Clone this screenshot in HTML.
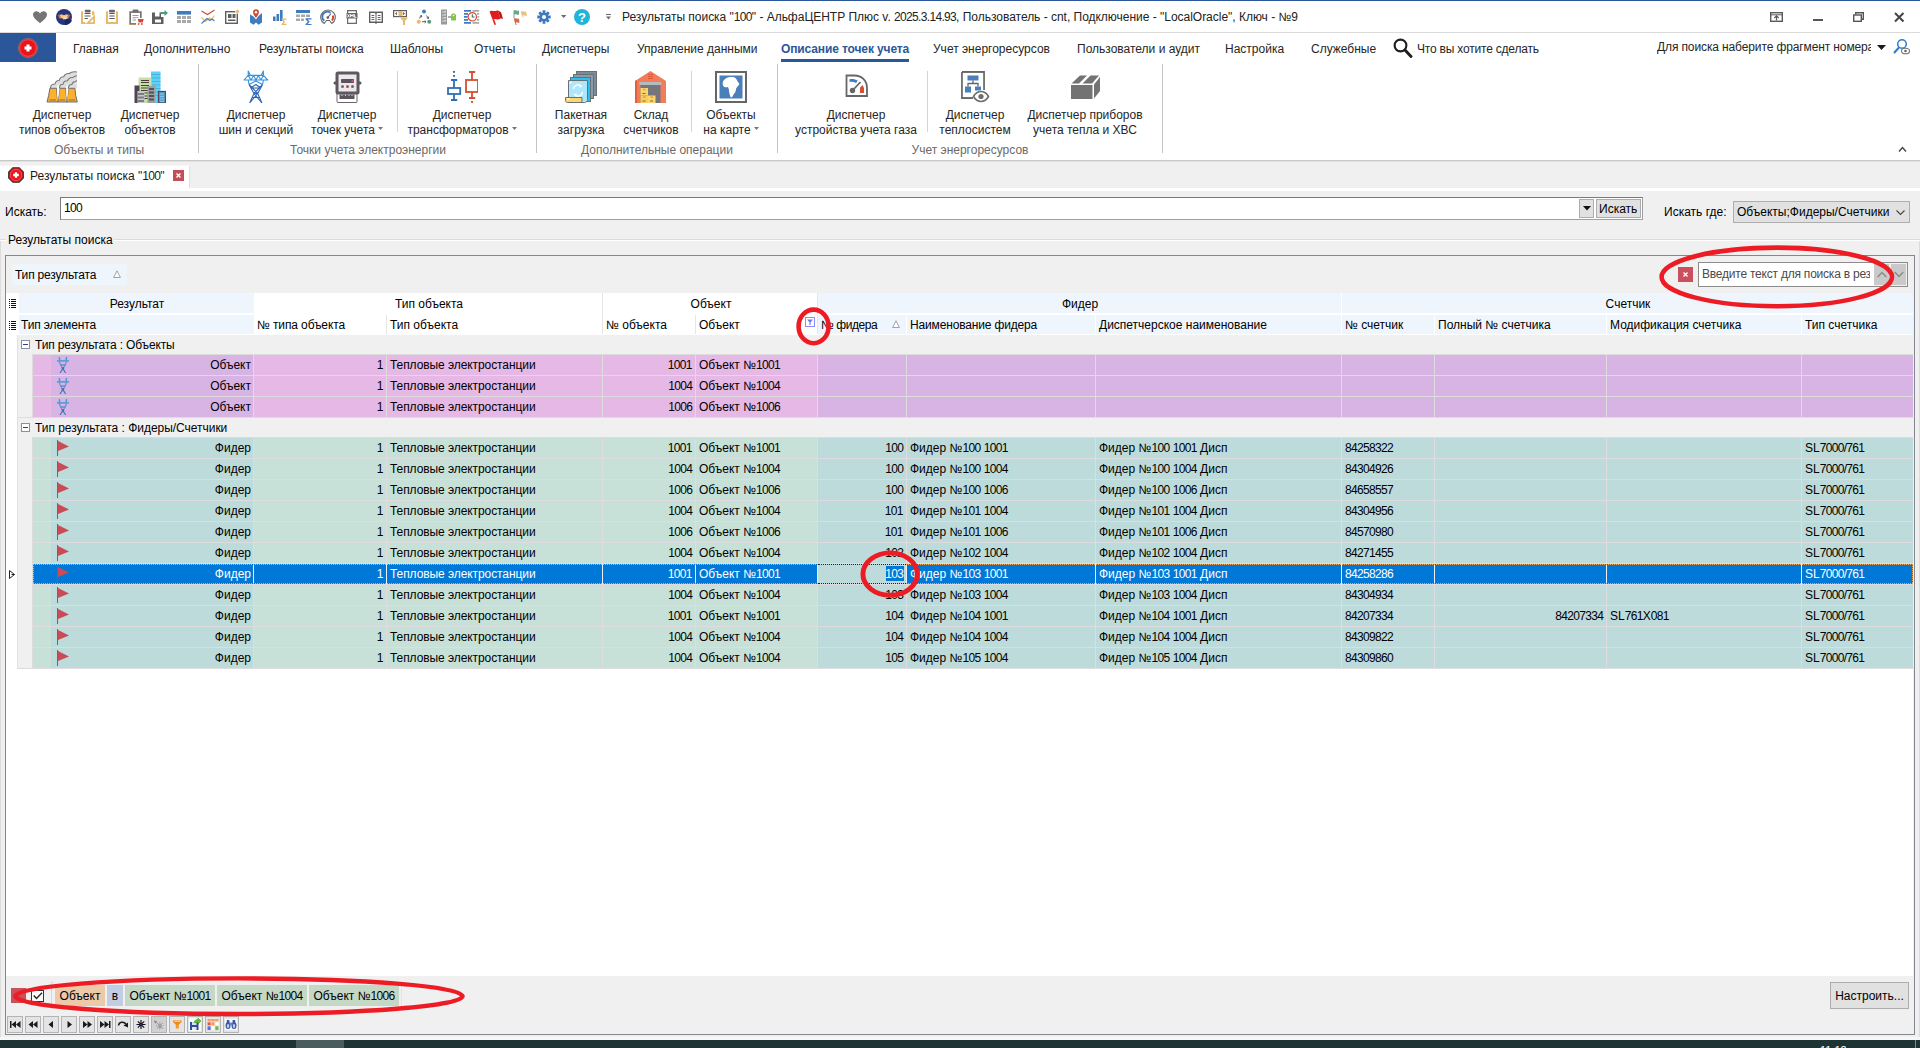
<!DOCTYPE html>
<html><head><meta charset="utf-8"><title>AlphaCenter</title><style>html,body{margin:0;padding:0}
body{width:1920px;height:1048px;overflow:hidden;background:#f0f0f0;font-family:"Liberation Sans",sans-serif;font-size:12px;color:#000;position:relative}
div,svg{position:absolute;box-sizing:border-box}
.t{white-space:nowrap;line-height:16px;height:16px}
.c{text-align:center}
.r{text-align:right}
i{font-style:normal;letter-spacing:-0.67px}
</style></head><body>
<div style="left:0px;top:0px;width:1920px;height:33px;background:#fff"></div>
<div style="left:0px;top:0px;width:1920px;height:1px;background:#2b579a"></div>
<div style="left:0px;top:32px;width:1920px;height:1px;background:#dadada"></div>
<svg style="left:32px;top:9px" width="16" height="16" viewBox="0 0 16 16"><path d="M8 14.2C3.5 10.6 1 8.4 1 5.6 1 3.6 2.5 2.2 4.4 2.2c1.4 0 2.7.8 3.6 2.2.9-1.4 2.2-2.2 3.6-2.2C13.5 2.2 15 3.6 15 5.600c0 2.8-2.5 5-7 8.600z" fill="#757575"/></svg>
<svg style="left:56px;top:9px" width="16" height="16" viewBox="0 0 16 16"><circle cx="8" cy="8" r="8" fill="#27357e"/><path d="M8 8l8 3.500A8 8 0 0 1 9 16z" fill="#1d2764"/><path d="M2.500 6.500l3-1.200 2.500 1 2.500-1 3 1.200-1.200 3-2.300-.5L8 10.800 5.500 9l-1.800.5z" fill="#f5c37a"/><path d="M7 7.500l3 0 1.500 2L9 10.500z" fill="#e9e2d0"/><path d="M2 6l1.800-.8 1 3.300-1.600.7zM14 6l-1.800-.8-1 3.300 1.600.7z" fill="#e8612c"/></svg>
<svg style="left:80px;top:9px" width="16" height="16" viewBox="0 0 16 16"><path d="M1 2.200h2v10.800H1zM1 13h4.500v2H1zM12 2.200h2.300v4H12z" fill="#e8b96a"/><path d="M15 5.500V15H5.500zM13.200 9.800V13.200H9.800z" fill="#e8b96a" fill-rule="evenodd"/><rect x="4.800" y=".8" width="5.800" height="2.600" rx=".8" fill="#666"/><path d="M4.500 4h6v1h-6zM4.500 6.500h6v1h-6zM4.500 9h3.400v1H4.500z" fill="#5a5a5a"/></svg>
<svg style="left:104px;top:9px" width="16" height="16" viewBox="0 0 16 16"><path d="M2 2.200h2v10.800h8V2.200h2V15H2z" fill="#e8b96a"/><rect x="5" y=".8" width="6" height="2.600" rx=".8" fill="#666"/><path d="M5.300 4h5.400v1H5.300zM5.300 6.500h5.400v1H5.300zM5.300 9h5.400v1H5.300z" fill="#5a5a5a"/></svg>
<svg style="left:128px;top:9px" width="16" height="16" viewBox="0 0 16 16"><rect x="1" y="2" width="13" height="14" fill="#e8b96a"/><rect x="2.300" y="3.200" width="10.400" height="11.600" fill="#fff"/><rect x="2.300" y="3.200" width="10.400" height="11.600" fill="none" stroke="#6e6e6e" stroke-width="1.300"/><rect x="4.500" y=".5" width="6" height="2.800" rx="1" fill="#6e6e6e"/><path d="M4.500 6h6v1h-6zM4.500 8.200h6v1h-6zM4.500 10.400h3.500v1H4.500z" fill="#9a9a9a"/><rect x="8" y="9" width="8" height="7" fill="#fff"/><path d="M8.200 9.300l1.500.5 1 3.700h4l1-3.500h-5.800" fill="#d2492f"/><rect x="9.800" y="14.200" width="1.600" height="1.600" fill="#d2492f"/><rect x="13" y="14.200" width="1.600" height="1.600" fill="#d2492f"/></svg>
<svg style="left:152px;top:9px" width="16" height="16" viewBox="0 0 16 16"><path d="M0 3.500h3v4h4.500v-4H9V8h2.500v7H0z" fill="#5f5f5f"/><rect x="3" y="10.500" width="6" height="3" fill="#fff"/><path d="M8.500 3h4V1l3.500 3-3.500 3V5h-4z" fill="#4b9c82"/></svg>
<svg style="left:176px;top:9px" width="16" height="16" viewBox="0 0 16 16"><rect x="1" y="2" width="14" height="3.600" fill="#3f7cbf"/><g fill="#a9a9a9"><rect x="1" y="7" width="4" height="3"/><rect x="6" y="7" width="4" height="3"/><rect x="11" y="7" width="4" height="3"/><rect x="1" y="11" width="4" height="3"/><rect x="6" y="11" width="4" height="3"/><rect x="11" y="11" width="4" height="3"/></g></svg>
<svg style="left:200px;top:9px" width="16" height="16" viewBox="0 0 16 16"><path d="M1.500 2l6 3.500L14.500 1" fill="none" stroke="#d2492f" stroke-width="1.100"/><path d="M1.500 8.500l4 4 4-3.500 2 1.500 3-4" fill="none" stroke="#e8b96a" stroke-width="1.100"/><path d="M1.500 14.500l5.500-5 3 2 2-1.500 2.500 2" fill="none" stroke="#3f7cbf" stroke-width="1.100"/></svg>
<svg style="left:224px;top:9px" width="16" height="16" viewBox="0 0 16 16"><rect x="1.700" y="2.700" width="11.600" height="11.600" fill="#fff" stroke="#5f5f5f" stroke-width="1.400"/><rect x="4" y="5" width="3.500" height="4" fill="#5f5f5f"/><path d="M8.500 5h3v4h-3zM4 10.500h7.500V12H4z" fill="#5f5f5f"/><circle cx="13.500" cy="2.500" r="2.300" fill="#fff"/><path d="M13.500.3l2 2.200-2 2.200-2-2.200z" fill="#e8b96a"/></svg>
<svg style="left:248px;top:9px" width="16" height="16" viewBox="0 0 16 16"><path d="M2 5.500l3.500 2v8.200L2 13.500zM14 4l-3.500 3v8.700L14 13.500zM5.500 7.500L8 10.500l2.500-3.500v8.700L8 13.500l-2.500 2.200z" fill="#3f7cbf"/><path d="M8 0.300a3 3 0 0 1 3 3c0 2-3 5.700-3 5.700S5 5.300 5 3.300a3 3 0 0 1 3-3z" fill="#d2492f"/><circle cx="8" cy="3.300" r="1.200" fill="#fff"/></svg>
<svg style="left:272px;top:9px" width="16" height="16" viewBox="0 0 16 16"><rect x="1" y="7.500" width="2.600" height="4.500" fill="#3f7cbf"/><rect x="4.500" y="5" width="2.600" height="7" fill="#3f7cbf"/><rect x="8" y="1" width="2.600" height="11" fill="#3f7cbf"/><path d="M9.500 9.500h5v1.200h-3l1.700 2-1.700 2.100h3V16h-5v-1l2-2.300-2-2.200z" fill="#e8b96a"/></svg>
<svg style="left:296px;top:9px" width="16" height="16" viewBox="0 0 16 16"><rect x="0" y="1" width="14" height="3" fill="#3f7cbf"/><g fill="#a9a9a9"><rect x="0" y="5.500" width="4" height="2.500"/><rect x="5" y="5.500" width="4" height="2.500"/><rect x="10" y="5.500" width="4" height="2.500"/><rect x="0" y="9.500" width="4" height="2.500"/><rect x="5" y="9.500" width="3" height="2.500"/></g><path d="M9.500 9.300h6v1.300h-3.800l2 2.200-2 2.200h3.800V16.300h-6v-1l2.300-2.500-2.300-2.500z" fill="#3f7cbf"/></svg>
<svg style="left:320px;top:9px" width="16" height="16" viewBox="0 0 16 16"><path d="M4.200 14.500A7.300 7.300 0 1 1 11.800 14.500L9.500 11.500h-3z" fill="#fff" stroke="#6a6a6a" stroke-width="1.100" stroke-linejoin="round"/><path d="M4.300 11.800A5 5 0 0 1 10.500 3.700" fill="none" stroke="#3f7cbf" stroke-width="1.900"/><path d="M12.800 6.500A5 5 0 0 1 11.900 11.500" fill="none" stroke="#d2492f" stroke-width="1.900"/><path d="M7.800 8.500l3.200-4" stroke="#5f5f5f" stroke-width="1.100"/><circle cx="7.800" cy="8.600" r="1.300" fill="#5f5f5f"/></svg>
<svg style="left:344px;top:9px" width="16" height="16" viewBox="0 0 16 16"><path d="M3.600 1.600h8.800v12.800H3.600z" fill="#fff" stroke="#6a6a6a" stroke-width="1.200"/><rect x="2.500" y="4" width="11" height="5.500" fill="#666"/><path d="M3.600 5.300l1.800 3M5.400 5.300l-1.800 3M6.600 8.300v-3l1.300 1.800 1.300-1.800v3M10.600 5.300v3h1.800" stroke="#fff" stroke-width="1" fill="none"/></svg>
<svg style="left:368px;top:9px" width="16" height="16" viewBox="0 0 16 16"><path d="M1.700 3.200h5.500l.8.800.8-.8h5.500v10H8.800l-.8.800-.8-.8H1.700z" fill="#fff" stroke="#5f5f5f" stroke-width="1.400"/><path d="M8 4v10" stroke="#5f5f5f"/><path d="M3.500 6h2.700v1H3.500zM3.500 8h2.700v1H3.500zM3.500 10h2.700v1H3.500zM9.800 6h2.700v1H9.800zM9.800 8h2.700v1H9.800zM9.800 10h2.700v1H9.800z" fill="#5f5f5f"/></svg>
<svg style="left:392px;top:9px" width="16" height="16" viewBox="0 0 16 16"><rect x="1.600" y="1.600" width="12.800" height="6" fill="#fff" stroke="#5f5f5f" stroke-width="1.200"/><rect x="6.500" y="2" width="4" height="5.200" fill="#e8b96a"/><path d="M3 4.600l2-1.600v3.200zM13 4.600l-2-1.600v3.200z" fill="#5f5f5f"/><path d="M8 8.500h8l-3 3.500v4h-2v-4z" fill="#e8b96a"/></svg>
<svg style="left:416px;top:9px" width="16" height="16" viewBox="0 0 16 16"><circle cx="8" cy="2.500" r="2" fill="#3f7cbf"/><circle cx="2.800" cy="12.700" r="2" fill="#e8b96a"/><circle cx="13.200" cy="12.700" r="2" fill="#5a9c7c"/><path d="M5.500 6.500l-2 3M5.500 6.500l-1.700.8M5.500 6.500l.2 1.800M10.500 6.500l2 3M12.500 9.500l-1.800-.6M12.500 9.500l.2-1.800M6 12.700h4M10 12.700l-1.300-1.200M10 12.700l-1.300 1.200" stroke="#5f5f5f" stroke-width="1" fill="none"/></svg>
<svg style="left:440px;top:9px" width="16" height="16" viewBox="0 0 16 16"><rect x="1" y="0.500" width="6" height="15" fill="#9a9a9a"/><path d="M2 2h4v1.500H2zM2 5h4v1.500H2zM2 8h4v1.500H2zM2 11h4v1.500H2z" fill="#d8d8d8"/><path d="M2.500 2.400h1M2.500 5.400h1M2.500 8.400h1M2.500 11.400h1" stroke="#3f7cbf" stroke-width=".8"/><path d="M8 8h3" stroke="#5f5f5f"/><path d="M11 6l1.500-1.500h2l1.500 1.500v5.500h-5z" fill="#8bc34a"/><circle cx="13.500" cy="6.500" r=".8" fill="#fff"/></svg>
<svg style="left:464px;top:9px" width="16" height="16" viewBox="0 0 16 16"><path d="M0 1h7v1.700H0zM0 4h4v1.700H0zM0 7h3.500v1.700H0zM0 10h4v1.700H0zM0 13h7v1.700H0z" fill="#3f7cbf"/><path d="M8.500 1h6.700v1.700H8.500zM13 4h2.200v1.700H13zM13.500 7h1.700v1.700h-1.700zM13 10h2.200v1.700H13zM8.500 13h6.700v1.700H8.500z" fill="#a9a9a9"/><circle cx="8.300" cy="7.800" r="4.200" fill="#fff" stroke="#d2492f" stroke-width="1.200"/><path d="M8.300 5.300v2.700h2.200" stroke="#5f5f5f" stroke-width="1.100" fill="none"/></svg>
<svg style="left:488px;top:9px" width="16" height="16" viewBox="0 0 16 16"><path d="M1.500 2.500C4 0.500 6 3.500 9.500 1.200l3 8.300C9 11.800 7.500 8.800 4.500 10.600z" fill="#e21b1b"/><path d="M4.500 10.600l2 5.400 1.500-.5-2-5.500z" fill="#e21b1b"/><path d="M9.500 1.200l3.500 2 2 6.500-2.500-.2z" fill="#c21313"/></svg>
<svg style="left:512px;top:9px" width="16" height="16" viewBox="0 0 16 16"><path d="M2 1.500c2-1 3 1 5 0v4c-2 1-3-1-5 0z" fill="#6aa58c"/><path d="M2 1.500v7.500" stroke="#6aa58c" stroke-width="1"/><path d="M9 2.500c2-1 3 1 5 0l1 4c-2 1-3.500-1-5 0z" fill="#e8c27c"/><path d="M9.500 2.500l1.500 6" stroke="#e8c27c" stroke-width="1"/><path d="M2 9.500c2-1 3 1 5 0l.5 4c-2 1-3-1-4.500 0z" fill="#d66a4c"/><path d="M2.500 9.500l1.500 6.500" stroke="#d66a4c" stroke-width="1"/></svg>
<svg style="left:536px;top:9px" width="16" height="16" viewBox="0 0 16 16"><g fill="#3f78ba"><circle cx="8" cy="8" r="4.300"/><rect x="6.600" y="1.300" width="2.800" height="13.400" rx=".3"/><rect x="6.600" y="1.300" width="2.800" height="13.400" rx=".3" transform="rotate(45 8 8)"/><rect x="6.600" y="1.300" width="2.800" height="13.400" rx=".3" transform="rotate(90 8 8)"/><rect x="6.600" y="1.300" width="2.800" height="13.400" rx=".3" transform="rotate(135 8 8)"/></g><circle cx="8" cy="8" r="2.100" fill="#fff"/></svg>
<svg style="left:561px;top:15px" width="6" height="3" viewBox="0 0 6 3"><path d="M0 0h5.400L2.700 3z" fill="#6a6a6a"/></svg>
<svg style="left:574px;top:9px" width="16" height="16" viewBox="0 0 16 16"><circle cx="8" cy="8" r="8" fill="#21b3d8"/><text x="8" y="13" font-size="13" font-weight="bold" text-anchor="middle" fill="#fff" font-family="Liberation Sans">?</text></svg>
<svg style="left:606px;top:14px" width="5" height="6" viewBox="0 0 5 6"><path d="M0 0h5v1H0zM0 2.500h5L2.500 5.500z" fill="#6a6a6a"/></svg>
<div class="t" style="left:622px;top:9px;color:#222;letter-spacing:-0.02px">Результаты поиска "<i>100</i>" - АльфаЦЕНТР Плюс v. <i>2025.3.14.93</i>, Пользователь - cnt, Подключение - "LocalOracle", Ключ - №<i>9</i></div>
<svg style="left:1770px;top:12px" width="13" height="10" viewBox="0 0 13 10"><rect x=".7" y=".7" width="11.600" height="8.600" fill="none" stroke="#5a5a5a" stroke-width="1.400"/><path d="M.7 2.800h11.600" stroke="#5a5a5a" stroke-width="1"/><path d="M6.500 4v4.500M4.300 6l2.200-2.200L8.700 6" stroke="#5a5a5a" stroke-width="1.200" fill="none"/></svg>
<div style="left:1813px;top:19px;width:10px;height:2px;background:#555"></div>
<svg style="left:1853px;top:12px" width="11" height="10" viewBox="0 0 11 10"><path d="M2.700 2.500V.7h7.600v6.600H8.500" fill="none" stroke="#555" stroke-width="1.400"/><rect x=".7" y="3" width="7.600" height="6.300" fill="#fff" stroke="#555" stroke-width="1.400"/></svg>
<svg style="left:1894px;top:12px" width="11" height="11" viewBox="0 0 11 11"><path d="M1 1l8.500 8.500M9.500 1L1 9.500" stroke="#444" stroke-width="2"/></svg>
<div style="left:0px;top:33px;width:1920px;height:127px;background:#fff"></div>
<div style="left:0px;top:33px;width:56px;height:29px;background:#2b579a"></div>
<svg style="left:18px;top:38px" width="20" height="20" viewBox="0 0 20 20"><circle cx="10" cy="10" r="9.500" fill="#e8141c" stroke="#8a6a6a" stroke-width="1"/><circle cx="10" cy="10" r="8.300" fill="none" stroke="#ff5a5a" stroke-width=".7"/><path d="M8.500 6.500h3v2h2v3h-2v2h-3v-2h-2v-3h2z" fill="#fff"/></svg>
<div class="t" style="left:73px;top:41px;color:#262626">Главная</div>
<div class="t" style="left:144px;top:41px;color:#262626">Дополнительно</div>
<div class="t" style="left:259px;top:41px;color:#262626">Результаты поиска</div>
<div class="t" style="left:390px;top:41px;color:#262626">Шаблоны</div>
<div class="t" style="left:474px;top:41px;color:#262626">Отчеты</div>
<div class="t" style="left:542px;top:41px;color:#262626">Диспетчеры</div>
<div class="t" style="left:637px;top:41px;color:#262626">Управление данными</div>
<div class="t" style="left:933px;top:41px;color:#262626">Учет энергоресурсов</div>
<div class="t" style="left:1077px;top:41px;color:#262626">Пользователи и аудит</div>
<div class="t" style="left:1225px;top:41px;color:#262626">Настройка</div>
<div class="t" style="left:1311px;top:41px;color:#262626">Служебные</div>
<div class="t" style="left:781px;top:41px;color:#2b579a;font-weight:bold;letter-spacing:-0.12px">Описание точек учета</div>
<div style="left:781px;top:59px;width:128px;height:3px;background:#2b579a"></div>
<svg style="left:1393px;top:38px" width="20" height="20" viewBox="0 0 20 20"><circle cx="7.500" cy="7.500" r="5.900" fill="none" stroke="#1e1e1e" stroke-width="2.100"/><path d="M12 12l6 6.500" stroke="#1e1e1e" stroke-width="2.900" stroke-linecap="round"/></svg>
<div class="t" style="left:1417px;top:40.5px;color:#262626;letter-spacing:-0.2px">Что вы хотите сделать</div>
<div style="left:1657px;top:38px;width:214px;height:18px;overflow:hidden"><div class="t" style="left:0px;top:1px;color:#262626;letter-spacing:-0.12px">Для поиска наберите фрагмент номера</div></div>
<svg style="left:1877px;top:45px" width="9" height="5" viewBox="0 0 9 5"><path d="M0 0h9L4.500 5z" fill="#1a1a1a"/></svg>
<svg style="left:1893px;top:38px" width="17" height="17" viewBox="0 0 17 17"><circle cx="9" cy="6" r="4.300" fill="none" stroke="#2b7cd3" stroke-width="1.500"/><path d="M6 9.500L1 15" stroke="#2b7cd3" stroke-width="2"/><ellipse cx="12.500" cy="13" rx="4" ry="2.800" fill="#fff" stroke="#777" stroke-width="1.100"/><circle cx="12.500" cy="13" r="1.300" fill="#666"/></svg>
<div style="left:198px;top:64px;width:1px;height:89px;background:#c6c6c6"></div>
<div style="left:536px;top:64px;width:1px;height:89px;background:#c6c6c6"></div>
<div style="left:777px;top:64px;width:1px;height:89px;background:#c6c6c6"></div>
<div style="left:1162px;top:64px;width:1px;height:89px;background:#c6c6c6"></div>
<div style="left:397px;top:71px;width:1px;height:61px;background:#d4d4d4"></div>
<div style="left:691px;top:71px;width:1px;height:61px;background:#d4d4d4"></div>
<div style="left:927px;top:71px;width:1px;height:61px;background:#d4d4d4"></div>
<div class="t c" style="left:-88px;width:300px;top:107px;color:#262626">Диспетчер</div>
<div class="t c" style="left:-88px;width:300px;top:122px;color:#262626">типов объектов</div>
<div class="t c" style="left:0px;width:300px;top:107px;color:#262626">Диспетчер</div>
<div class="t c" style="left:0px;width:300px;top:122px;color:#262626">объектов</div>
<div class="t c" style="left:106px;width:300px;top:107px;color:#262626">Диспетчер</div>
<div class="t c" style="left:106px;width:300px;top:122px;color:#262626">шин и секций</div>
<div class="t c" style="left:197px;width:300px;top:107px;color:#262626">Диспетчер</div>
<div class="t c" style="left:197px;width:300px;top:122px;color:#262626">точек учета<svg style="position:relative;display:inline-block;margin-left:3px;top:-4px" width="5" height="3" viewBox="0 0 5 3"><path d="M0 0h5L2.500 3z" fill="#777"/></svg></div>
<div class="t c" style="left:312px;width:300px;top:107px;color:#262626">Диспетчер</div>
<div class="t c" style="left:312px;width:300px;top:122px;color:#262626">трансформаторов<svg style="position:relative;display:inline-block;margin-left:3px;top:-4px" width="5" height="3" viewBox="0 0 5 3"><path d="M0 0h5L2.500 3z" fill="#777"/></svg></div>
<div class="t c" style="left:431px;width:300px;top:107px;color:#262626">Пакетная</div>
<div class="t c" style="left:431px;width:300px;top:122px;color:#262626">загрузка</div>
<div class="t c" style="left:501px;width:300px;top:107px;color:#262626">Склад</div>
<div class="t c" style="left:501px;width:300px;top:122px;color:#262626">счетчиков</div>
<div class="t c" style="left:581px;width:300px;top:107px;color:#262626">Объекты</div>
<div class="t c" style="left:581px;width:300px;top:122px;color:#262626">на карте<svg style="position:relative;display:inline-block;margin-left:3px;top:-4px" width="5" height="3" viewBox="0 0 5 3"><path d="M0 0h5L2.500 3z" fill="#777"/></svg></div>
<div class="t c" style="left:706px;width:300px;top:107px;color:#262626">Диспетчер</div>
<div class="t c" style="left:706px;width:300px;top:122px;color:#262626">устройства учета газа</div>
<div class="t c" style="left:825px;width:300px;top:107px;color:#262626">Диспетчер</div>
<div class="t c" style="left:825px;width:300px;top:122px;color:#262626">теплосистем</div>
<div class="t c" style="left:935px;width:300px;top:107px;color:#262626">Диспетчер приборов</div>
<div class="t c" style="left:935px;width:300px;top:122px;color:#262626">учета тепла и ХВС</div>
<div class="t c" style="left:-51px;width:300px;top:142px;color:#6a6a6a">Объекты и типы</div>
<div class="t c" style="left:218px;width:300px;top:142px;color:#6a6a6a">Точки учета электроэнергии</div>
<div class="t c" style="left:507px;width:300px;top:142px;color:#6a6a6a">Дополнительные операции</div>
<div class="t c" style="left:820px;width:300px;top:142px;color:#6a6a6a">Учет энергоресурсов</div>
<svg style="left:1898px;top:146px" width="9" height="7" viewBox="0 0 9 7"><path d="M1 5.500l3.500-4 3.500 4" fill="none" stroke="#444" stroke-width="1.400"/></svg>
<div style="left:0px;top:160px;width:1920px;height:1px;background:#c8c8c8"></div>
<div style="left:0px;top:161px;width:1920px;height:1px;background:#e2e2e2"></div>
<svg style="left:46px;top:71px" width="32" height="32" viewBox="0 0 32 32"><path d="M4.500 17.500c0-2.500 1.500-4.500 4.500-4.500.3-2 1.800-3.500 4.200-3.500.5-2.300 2-3.800 4.500-3.800.8-2.200 2.800-3.500 5.500-3.200 1.700-1.500 4.500-2 7.800-1.500V17.500z" fill="#dedede"/>
<path d="M10.600 17.500l1.500-4.500 1.400 4.500zM19.800 17.500l1.300-4.500 1.200 4.500z" fill="#fff"/>
<path d="M4.500 17c0-2.500 1.500-4 4.500-4 .3-2 1.800-3.500 4.200-3.500.5-2.300 2-3.800 4.500-3.800.8-2.200 2.800-3.500 5.500-3.200 1.700-1.500 4.500-2 7.800-1.500M13.500 17c0-2 1.200-3.700 3.500-3.700.4-2.200 2-3.600 4.500-3.500.8-2.200 2.800-3.500 5.500-3.300 1-1.200 2.300-1.800 4-1.800M22.300 17c.3-2 1.500-3.500 3.500-3.500.5-1.800 2-3 4-3 .4-.5.800-.8 1.200-1" fill="none" stroke="#767676" stroke-width="1.100"/>
<path d="M3.900 17.300h6.700l.5 7 .7 6.700H1l1.700-6.700zM13.500 17.300h6.300l.5 7 .7 6.700h-9.200l.9-6.700zM22.300 17.300h6.600l.8 7L31.300 31H21l.7-6.700z" fill="#fcb02c" stroke="#6e6e6e" stroke-width="1" stroke-linejoin="round"/>
<path d="M11.100 17.500l.1 6.800.6 6.200.9-6.200.8-6.800zM20.300 17.500v6.800l.7 6.200.7-6.200.6-6.800z" fill="#fff"/>
<path d="M3.300 29h6.700M13.300 29h5.700M22.800 29h6.500" stroke="#7a6a4a" stroke-width=".9"/></svg>
<svg style="left:134px;top:71px" width="32" height="32" viewBox="0 0 32 32"><rect x="17" y="0.500" width="9.500" height="31.500" fill="#5fd0f7"/><path d="M17 3.500h9.500M17 7h9.500M17 10.500h9.500M17 14h9.500M17 17.500h9.500M17 21h9.500M17 24.500h9.500" stroke="#46b3dd" stroke-width="1"/>
<rect x="4.500" y="6.500" width="13" height="25.500" fill="#c5e0a5"/><path d="M7 9.500h8M7 11.500h8M7 14.500h8M7 17h8M7 19.500h8M7 22h8M7 25h8M7 27.500h8" stroke="#4a3a3a" stroke-width="1.100"/>
<rect x="0.500" y="14.500" width="5" height="17.500" fill="#4f4452"/><rect x="13.500" y="15" width="8" height="17" fill="#9aa0a0"/><g fill="#575057"><rect x="15" y="17" width="5" height="2"/><rect x="15" y="20.500" width="5" height="2"/><rect x="15" y="24" width="5" height="2"/><rect x="15" y="27.500" width="5" height="2"/></g>
<rect x="3.500" y="20" width="7" height="12" fill="#c3c9c9"/><g fill="#3b3038"><rect x="4.500" y="22" width="1" height="2"/><rect x="6.500" y="22" width="1" height="2"/><rect x="8.500" y="22" width="1" height="2"/><rect x="4.500" y="25.500" width="1" height="2"/><rect x="6.500" y="25.500" width="1" height="2"/><rect x="8.500" y="25.500" width="1" height="2"/><rect x="4.500" y="29" width="1" height="2"/><rect x="6.500" y="29" width="1" height="2"/><rect x="8.500" y="29" width="1" height="2"/></g>
<rect x="24.500" y="20.500" width="7" height="11.500" fill="#5aa3cd" stroke="#4f4a60" stroke-width="1.300"/><path d="M26 23h4M26 25.500h4M26 28h4M26 30.500h4" stroke="#7cc7ea" stroke-width="1.200"/></svg>
<svg style="left:243px;top:70px" width="26" height="34" viewBox="-1 -1 26 34"><g fill="none" stroke="#3393dc" stroke-width="1.100" stroke-linejoin="round"><path d="M4.200 0v4.400h2.300zM19.400 0v4.400h-2.300zM0 9l4.200-4.600h15.200L23.750 9zM4.200 4.400L7 9l2.500-4.600L12 9l2.300-4.600L16.800 9l2.600-4.600M4.200 9l.8 4.500M19.400 9l-.8 4.500M5 13.500L11.900 10l6.700 3.500"/></g>
<g fill="none" stroke="#2a66b4" stroke-width="1.100" stroke-linejoin="round"><path d="M5 13.500L10 22.500 5.700 32M18.600 13.500L13.700 22.500 17.900 32M5 13.500l8.700 9M18.600 13.500l-8.600 9M10 22.500l7.900 9.500M13.700 22.500L5.700 32M7 17h9.700M10 22.500h3.700M8.500 26.500h6.700M7 17l4.900-3.500 4.800 3.500"/></g></svg>
<svg style="left:333px;top:71px" width="32" height="32" viewBox="0 0 32 32"><rect x="4" y="22" width="20" height="9.500" rx="1" fill="#fff" stroke="#6a6468" stroke-width="1"/><rect x="6.500" y="23.500" width="15" height="4.500" fill="#5a545a"/><path d="M9 23.500v1.500M12.500 23.500v1.500M16 23.500v1.500M19 23.500v1.500" stroke="#d8d8d8" stroke-width="1"/>
<rect x="0.500" y="10.500" width="28" height="3" rx="1.500" fill="#5a545a"/><rect x="2.500" y="0.500" width="24" height="23" rx="2.500" fill="#5f595f"/><rect x="5.500" y="3.500" width="18" height="17" fill="#ebe9ee"/><rect x="8" y="8" width="13" height="4" rx=".8" fill="#5a545a"/><rect x="18.500" y="9" width="2" height="2" fill="#d9535f"/><circle cx="9.500" cy="15.500" r="1.500" fill="#6a6a6a"/><circle cx="14.500" cy="15.500" r="1.500" fill="#b8484c"/><circle cx="19.500" cy="15.500" r="1.500" fill="#6a6a6a"/></svg>
<svg style="left:446px;top:71px" width="32" height="32" viewBox="0 0 32 32"><g fill="none" stroke="#2f6fb5" stroke-width="1.800"><rect x="2" y="17" width="12.200" height="6"/><path d="M8 9v8M5 9h6.200M8 23v6M5 29h6.200"/></g><rect x="7" y="0" width="2" height="1.800" fill="#2f6fb5"/><rect x="7" y="4" width="2" height="1.800" fill="#2f6fb5"/>
<g fill="none" stroke="#d4502f" stroke-width="1.800"><rect x="20" y="9" width="12" height="12"/><path d="M26 1v8M23 1h6.200M26 21v6M23 27h6.200"/></g><rect x="25" y="30" width="2" height="1.800" fill="#d4502f"/></svg>
<svg style="left:565px;top:71px" width="32" height="32" viewBox="0 0 32 32"><rect x="11.500" y="0.500" width="20" height="24" fill="#7b8b99" stroke="#6a6f74"/><rect x="8.500" y="3.500" width="20" height="24" fill="#8b9ba8" stroke="#6a6f74"/><rect x="5.500" y="6.500" width="20" height="24" fill="#29c0f2" stroke="#6a6f74"/>
<path d="M3.500 9.500h19v19c0 2-1.500 3-3 3H3.500z" fill="#aee6fb" stroke="#6a6f74"/><path d="M5 13v-2h2" stroke="#fff" fill="none"/><path d="M8.500 18a4.500 4.500 0 0 1 8-2.500M17.500 21a4.500 4.500 0 0 1-8 2.500" fill="none" stroke="#fff" stroke-width="1.300"/><path d="M15.500 13.500l1.500 2.500-3 .5zM10.500 25.500L9 23l3-.5z" fill="#fff"/>
<path d="M0.500 26.500h16.500v3c0 1-.8 2-2 2H2.500c-1.200 0-2-1-2-2z" fill="#fcd670" stroke="#6a6f74"/><path d="M2 28h3" stroke="#fff"/></svg>
<svg style="left:635px;top:71px" width="32" height="32" viewBox="0 0 32 32"><path d="M0 10L15.500 0 31 10v22H0z" fill="#f07c58"/><path d="M0 10v22h2V9z" fill="#e0603c"/><path d="M13 5.500h5M13 7.500h5M13 3.500h5" stroke="#d9583a" stroke-width="1"/><rect x="4.500" y="11" width="22" height="3" fill="#b4babd"/><rect x="5.500" y="14" width="20" height="18" fill="#75767c"/>
<rect x="5.500" y="17" width="7.500" height="7.500" fill="#fbd46c"/><rect x="5.500" y="24.500" width="7.500" height="7.500" fill="#f9cc5c"/><rect x="13" y="24.500" width="7.500" height="7.500" fill="#fbd46c"/><path d="M8 18.500h2.500M8 26h2.500M15.500 26h2.500" stroke="#d9a53a" stroke-width="1.600"/><path d="M7.500 22.500h3M7.500 30h3M15 30h3" stroke="#6f6870" stroke-width="1.200"/></svg>
<svg style="left:715px;top:71px" width="32" height="32" viewBox="0 0 32 32"><rect x="1" y="1" width="30" height="30" fill="#fff" stroke="#666" stroke-width="2"/><rect x="4.500" y="4.500" width="23" height="23" fill="#4a7fba"/><path d="M9 9c2-2.500 5-3.500 8-3 1.500-.3 3 .5 4 1.500l2 3.500 1.500 2c-1 2-3 3-3.500 5 0 2-1 4-2.500 5.500-.5 1.500-1.200 2.500-2.500 3-1.200-1.500-1.500-4-2-6 .3-1.500-.4-3-1-4.500-2 .5-4 .5-5-1.500-.8-2 0-4.500 1-5.500z" fill="#fff"/></svg>
<svg style="left:845px;top:74px" width="24" height="24" viewBox="0 0 24 24"><path d="M1.500 1.500h8c7 0 12.500 5 12.500 12.500v8H1.500z" fill="#fff" stroke="#666" stroke-width="1.800"/><path d="M4.500 5.200c3-.6 6 0 8.200 1.300l-1.600 2.500c-2-1.200-4.300-1.500-6.600-1z" fill="#3f7cbf"/><path d="M15 13.500l2.500-2.500 1.500 3v5h-4z" fill="#d4502f"/><path d="M7.500 16.500l8-8.500" stroke="#666" stroke-width="1.800"/><circle cx="7.500" cy="16.500" r="2.700" fill="#666"/></svg>
<svg style="left:961px;top:71px" width="32" height="32" viewBox="0 0 32 32"><path d="M1 1h22v18M12 27H1V1" fill="none" stroke="#666" stroke-width="1.800"/><rect x="1.900" y="1.900" width="20.200" height="24.200" fill="#fff"/><rect x="6.500" y="4.500" width="11" height="5" fill="#4a7fba"/><path d="M12 9.500v3M7 15.500v-3h10v3" fill="none" stroke="#666" stroke-width="1.300"/><rect x="4" y="15.500" width="6" height="6" fill="#4a7fba"/><rect x="14" y="15.500" width="6" height="4" fill="#4a7fba"/>
<path d="M11.500 25.500c2-4 5-6 8.500-6s6.500 2 8.500 6c-2 4-5 6-8.500 6s-6.500-2-8.500-6z" fill="#fff"/><path d="M12.500 25.500c2-3.500 4.500-5 7.500-5s5.500 1.500 7.500 5c-2 3.500-4.500 5-7.500 5s-5.500-1.500-7.500-5z" fill="#fff" stroke="#6e6e6e" stroke-width="1.700"/><circle cx="20" cy="25.500" r="2.600" fill="#6e6e6e"/></svg>
<svg style="left:1071px;top:74px" width="30" height="26" viewBox="0 0 30 26"><path d="M0 11h21.500v14H0z" fill="#737373"/><path d="M0.500 9.500L9 1.500h7L8 9.500zM11.500 9.500l8-8h8.500l-7 8z" fill="#737373"/><path d="M23 10.500l6-7.500v14l-6 7.500z" fill="#737373"/></svg>
<div style="left:0px;top:188px;width:1920px;height:3px;background:#fff"></div>
<div style="left:0px;top:165px;width:190px;height:1px;background:#f6f6f6"></div>
<div style="left:0px;top:166px;width:189px;height:25px;background:#fff"></div>
<div style="left:189px;top:166px;width:1px;height:22px;background:#e0e0e0"></div>
<svg style="left:8px;top:167px" width="16" height="16" viewBox="0 0 18 18"><path d="M5.500 .8h7l4.700 4.700v7l-4.700 4.700h-7L.8 12.500v-7z" fill="#e8141c" stroke="#3a2a2a" stroke-width="1.300"/><circle cx="9" cy="9" r="6.300" fill="none" stroke="#ff6a6a" stroke-width=".7"/><path d="M7.700 5.800h2.600v1.900h1.900v2.600h-1.900v1.900H7.700v-1.900H5.800V7.700h1.900z" fill="#fff"/></svg>
<div class="t" style="left:30px;top:168px;color:#1a1a1a">Результаты поиска "<i>100</i>"</div>
<div style="left:173px;top:170px;width:11px;height:11px;background:#c44d58"></div>
<svg style="left:176px;top:173px" width="5" height="5" viewBox="0 0 5 5"><path d="M.5.500l4 4M4.500.500l-4 4" stroke="#fff" stroke-width="1.400"/></svg>
<div class="t" style="left:5px;top:204px;">Искать:</div>
<div style="left:60px;top:197px;width:1583px;height:23px;background:#fff;border:1px solid #7a7a7a;border-right-color:#a0a0a0;border-bottom-color:#a0a0a0"></div>
<div class="t" style="left:64px;top:200px;"><i>100</i></div>
<div style="left:1579px;top:199px;width:15px;height:19px;background:#e1e1e1;border:1px solid #adadad"></div>
<svg style="left:1583px;top:206px" width="8" height="5" viewBox="0 0 8 5"><path d="M0 0h8L4 4.500z" fill="#111"/></svg>
<div style="left:1596px;top:199px;width:45px;height:19px;background:#e1e1e1;border:1px solid #adadad"></div>
<div class="t" style="left:1599px;top:201px;">Искать</div>
<div class="t" style="left:1664px;top:204px;">Искать где:</div>
<div style="left:1733px;top:201px;width:177px;height:22px;background:#e1e1e1;border:1px solid #adadad"></div>
<div class="t" style="left:1737px;top:204px;">Объекты;Фидеры/Счетчики</div>
<svg style="left:1896px;top:210px" width="9" height="6" viewBox="0 0 9 6"><path d="M.5.500l4 4 4-4" fill="none" stroke="#444" stroke-width="1.100"/></svg>
<div style="left:0px;top:239px;width:1px;height:799px;background:#dcdcdc"></div>
<div style="left:1919px;top:239px;width:1px;height:799px;background:#dcdcdc"></div>
<div style="left:0px;top:239px;width:1920px;height:1px;background:#dcdcdc"></div>
<div style="left:0px;top:240px;width:1920px;height:1px;background:#fff"></div>
<div style="left:6px;top:232px;width:108px;height:16px;background:#f0f0f0"></div>
<div class="t" style="left:8px;top:232px;">Результаты поиска</div>
<div style="left:5px;top:255px;width:1910px;height:780px;border:1px solid #828790;background:#f0f0f0"></div>
<div style="left:6px;top:293px;width:1908px;height:683px;background:#fff"></div>
<div style="left:12px;top:264px;width:115px;height:21px;background:#eef5fd"></div>
<div class="t" style="left:15px;top:267px;letter-spacing:-0.18px">Тип результата</div>
<svg style="left:113px;top:270px" width="8" height="8" viewBox="0 0 8 8"><path d="M4 .8L7.400 7.500H.6z" fill="#fff" stroke="#9a9a9a" stroke-width=".9"/></svg>
<div style="left:1678px;top:267px;width:15px;height:15px;background:#c9505c"></div>
<svg style="left:1683px;top:272px" width="5" height="5" viewBox="0 0 5 5"><path d="M.5.500l4 4M4.500.500l-4 4" stroke="#fff" stroke-width="1.300"/></svg>
<div style="left:1698px;top:262px;width:210px;height:25px;background:#f0f0f0;border:1px solid #8c8c8c"></div>
<div style="left:1874px;top:264px;width:15px;height:21px;background:#c9c9c9"></div>
<div style="left:1891px;top:264px;width:15px;height:21px;background:#c9c9c9"></div>
<div style="left:1699px;top:263px;width:175px;height:23px;background:#fff"></div>
<div style="left:1702px;top:266px;width:168px;height:17px;overflow:hidden"><div class="t" style="left:0px;top:0px;color:#4a4a4a;letter-spacing:-0.22px">Введите текст для поиска в результатах</div></div>
<svg style="left:1877px;top:271px" width="10" height="8" viewBox="0 0 10 8"><path d="M.7 6l4.300-4.500L9.300 6" fill="none" stroke="#8a8a8a" stroke-width="1.400"/></svg>
<svg style="left:1894px;top:271px" width="10" height="8" viewBox="0 0 10 8"><path d="M.7 1l4.300 4.500L9.300 1" fill="none" stroke="#8a8a8a" stroke-width="1.400"/></svg>
<div style="left:19px;top:293px;width:234px;height:20px;background:#eef5fd"></div>
<div class="t c" style="left:-13px;width:300px;top:296px;">Результат</div>
<div class="t c" style="left:279px;width:300px;top:296px;">Тип объекта</div>
<div class="t c" style="left:561px;width:300px;top:296px;">Объект</div>
<div style="left:818px;top:293px;width:523px;height:20px;background:#eef5fd"></div>
<div class="t c" style="left:930px;width:300px;top:296px;">Фидер</div>
<div style="left:1342px;top:293px;width:571px;height:20px;background:#eef5fd"></div>
<div class="t c" style="left:1478px;width:300px;top:296px;">Счетчик</div>
<div style="left:19px;top:315px;width:234px;height:19px;background:#eef5fd"></div>
<div class="t" style="left:21px;top:317px;letter-spacing:-0.12px">Тип элемента</div>
<div class="t" style="left:257px;top:317px;letter-spacing:-0.12px">№ типа объекта</div>
<div class="t" style="left:390px;top:317px;">Тип объекта</div>
<div class="t" style="left:606px;top:317px;">№ объекта</div>
<div class="t" style="left:699px;top:317px;">Объект</div>
<div style="left:818px;top:315px;width:88px;height:19px;background:#eef5fd"></div>
<div class="t" style="left:821px;top:317px;letter-spacing:-0.45px">№ фидера</div>
<div style="left:907px;top:315px;width:188px;height:19px;background:#eef5fd"></div>
<div class="t" style="left:910px;top:317px;letter-spacing:-0.16px">Наименование фидера</div>
<div style="left:1096px;top:315px;width:245px;height:19px;background:#eef5fd"></div>
<div class="t" style="left:1099px;top:317px;">Диспетчерское наименование</div>
<div style="left:1342px;top:315px;width:92px;height:19px;background:#eef5fd"></div>
<div class="t" style="left:1345px;top:317px;">№ счетчик</div>
<div style="left:1435px;top:315px;width:171px;height:19px;background:#eef5fd"></div>
<div class="t" style="left:1438px;top:317px;">Полный № счетчика</div>
<div style="left:1607px;top:315px;width:194px;height:19px;background:#eef5fd"></div>
<div class="t" style="left:1610px;top:317px;">Модификация счетчика</div>
<div style="left:1802px;top:315px;width:111px;height:19px;background:#eef5fd"></div>
<div class="t" style="left:1805px;top:317px;">Тип счетчика</div>
<div style="left:386px;top:315px;width:1px;height:19px;background:#e6e6e6"></div>
<div style="left:602px;top:293px;width:1px;height:41px;background:#e6e6e6"></div>
<div style="left:695px;top:315px;width:1px;height:19px;background:#e6e6e6"></div>
<div style="left:817px;top:293px;width:1px;height:41px;background:#e6e6e6"></div>
<div style="left:253px;top:293px;width:1px;height:41px;background:#f4f4f4"></div>
<svg style="left:9px;top:299px" width="7" height="9" viewBox="0 0 7 9"><path d="M0 .5h1M0 2.500h1M0 4.500h1M0 6.500h1M0 8.500h1M2 .5h5M2 2.500h5M2 4.500h5M2 6.500h5M2 8.500h5" stroke="#111" stroke-width="1"/></svg>
<svg style="left:9px;top:321px" width="7" height="9" viewBox="0 0 7 9"><path d="M0 .5h1M0 2.500h1M0 4.500h1M0 6.500h1M0 8.500h1M2 .5h5M2 2.500h5M2 4.500h5M2 6.500h5M2 8.500h5" stroke="#111" stroke-width="1"/></svg>
<svg style="left:805px;top:317px" width="10" height="10" viewBox="0 0 10 10"><rect x=".5" y=".5" width="9" height="9" fill="#fff" stroke="#8a8cff"/><path d="M2 2.500h6L5.600 5.200V8H4.400V5.200z" fill="#6a7cf0"/></svg>
<svg style="left:892px;top:320px" width="8" height="8" viewBox="0 0 8 8"><path d="M4 .8L7.400 7.500H.6z" fill="#fff" stroke="#9a9a9a" stroke-width=".9"/></svg>
<div style="left:17px;top:335px;width:1897px;height:334px;background:#f0f0f0"></div>
<div style="left:17px;top:335px;width:1px;height:334px;background:#e2e2e2"></div>
<div style="left:32px;top:354px;width:1881px;height:1px;background:#dcdcdc"></div>
<div style="left:32px;top:354px;width:1px;height:63px;background:#dcdcdc"></div>
<div style="left:32px;top:437px;width:1881px;height:1px;background:#dcdcdc"></div>
<div style="left:32px;top:437px;width:1px;height:231px;background:#dcdcdc"></div>
<div style="left:17px;top:668px;width:1896px;height:1px;background:#dcdcdc"></div>
<svg style="left:21px;top:340px" width="9" height="9" viewBox="0 0 9 9"><rect x=".5" y=".5" width="8" height="8" fill="#fff" stroke="#8a8fa0"/><path d="M2 4.500h5" stroke="#30408a"/></svg>
<div class="t" style="left:35px;top:337px;letter-spacing:-0.15px">Тип результата : Объекты</div>
<div style="left:33px;top:355px;width:1880px;height:21px;background:#dedcde"></div>
<div style="left:33px;top:355px;width:18px;height:20px;background:#e5b8e5"></div>
<div style="left:51px;top:355px;width:202px;height:20px;background:#d8b4e4"></div>
<div style="left:254px;top:355px;width:564px;height:20px;background:#e5b8e5"></div>
<div style="left:818px;top:355px;width:1095px;height:20px;background:#d8b4e4"></div>
<div style="left:253px;top:355px;width:1px;height:20px;background:#dedcde"></div>
<div style="left:386px;top:355px;width:1px;height:20px;background:#dedcde"></div>
<div style="left:602px;top:355px;width:1px;height:20px;background:#dedcde"></div>
<div style="left:695px;top:355px;width:1px;height:20px;background:#dedcde"></div>
<div style="left:817px;top:355px;width:1px;height:20px;background:#dedcde"></div>
<div style="left:906px;top:355px;width:1px;height:20px;background:#dedcde"></div>
<div style="left:1095px;top:355px;width:1px;height:20px;background:#dedcde"></div>
<div style="left:1341px;top:355px;width:1px;height:20px;background:#dedcde"></div>
<div style="left:1434px;top:355px;width:1px;height:20px;background:#dedcde"></div>
<div style="left:1606px;top:355px;width:1px;height:20px;background:#dedcde"></div>
<div style="left:1801px;top:355px;width:1px;height:20px;background:#dedcde"></div>
<svg style="left:57px;top:357px" width="12" height="16" viewBox="0 0 12 16"><g fill="none"><path d="M2.300 0l.4 3.400M9.500 0l-.4 3.400" stroke="#4a9ad8" stroke-width="1.500"/><path d="M0 3.900h11.900" stroke="#4a9ad8" stroke-width="1.500"/><path d="M2.600 4.500c0 2.300.8 3.800 2 5.200M9.200 4.500c0 2.300-.8 3.800-2 5.200" stroke="#4a8fd0" stroke-width="1.100"/><path d="M4.600 9.700L8.700 16M7.200 9.700L3 16M4 8h3.800" stroke="#3a72b8" stroke-width="1.100"/></g><circle cx="5.900" cy="11.700" r="1.400" fill="#3a72b8" opacity=".75"/></svg>
<div class="t r" style="left:19px;width:232px;top:357px;">Объект</div>
<div class="t r" style="left:254px;width:128.8px;top:357px;"><i>1</i></div>
<div class="t" style="left:390px;top:357px;letter-spacing:-0.08px;">Тепловые электростанции</div>
<div class="t r" style="left:603px;width:88.8px;top:357px;"><i>1001</i></div>
<div class="t" style="left:699px;top:357px;">Объект №<i>1001</i></div>
<div style="left:33px;top:376px;width:1880px;height:21px;background:#dedcde"></div>
<div style="left:33px;top:376px;width:18px;height:20px;background:#e5b8e5"></div>
<div style="left:51px;top:376px;width:202px;height:20px;background:#d8b4e4"></div>
<div style="left:254px;top:376px;width:564px;height:20px;background:#e5b8e5"></div>
<div style="left:818px;top:376px;width:1095px;height:20px;background:#d8b4e4"></div>
<div style="left:253px;top:376px;width:1px;height:20px;background:#dedcde"></div>
<div style="left:386px;top:376px;width:1px;height:20px;background:#dedcde"></div>
<div style="left:602px;top:376px;width:1px;height:20px;background:#dedcde"></div>
<div style="left:695px;top:376px;width:1px;height:20px;background:#dedcde"></div>
<div style="left:817px;top:376px;width:1px;height:20px;background:#dedcde"></div>
<div style="left:906px;top:376px;width:1px;height:20px;background:#dedcde"></div>
<div style="left:1095px;top:376px;width:1px;height:20px;background:#dedcde"></div>
<div style="left:1341px;top:376px;width:1px;height:20px;background:#dedcde"></div>
<div style="left:1434px;top:376px;width:1px;height:20px;background:#dedcde"></div>
<div style="left:1606px;top:376px;width:1px;height:20px;background:#dedcde"></div>
<div style="left:1801px;top:376px;width:1px;height:20px;background:#dedcde"></div>
<svg style="left:57px;top:378px" width="12" height="16" viewBox="0 0 12 16"><g fill="none"><path d="M2.300 0l.4 3.400M9.500 0l-.4 3.400" stroke="#4a9ad8" stroke-width="1.500"/><path d="M0 3.900h11.900" stroke="#4a9ad8" stroke-width="1.500"/><path d="M2.600 4.500c0 2.300.8 3.800 2 5.200M9.200 4.500c0 2.300-.8 3.800-2 5.200" stroke="#4a8fd0" stroke-width="1.100"/><path d="M4.600 9.700L8.700 16M7.200 9.700L3 16M4 8h3.800" stroke="#3a72b8" stroke-width="1.100"/></g><circle cx="5.900" cy="11.700" r="1.400" fill="#3a72b8" opacity=".75"/></svg>
<div class="t r" style="left:19px;width:232px;top:378px;">Объект</div>
<div class="t r" style="left:254px;width:128.8px;top:378px;"><i>1</i></div>
<div class="t" style="left:390px;top:378px;letter-spacing:-0.08px;">Тепловые электростанции</div>
<div class="t r" style="left:603px;width:89.3px;top:378px;"><i>1004</i></div>
<div class="t" style="left:699px;top:378px;">Объект №<i>1004</i></div>
<div style="left:33px;top:397px;width:1880px;height:21px;background:#dedcde"></div>
<div style="left:33px;top:397px;width:18px;height:20px;background:#e5b8e5"></div>
<div style="left:51px;top:397px;width:202px;height:20px;background:#d8b4e4"></div>
<div style="left:254px;top:397px;width:564px;height:20px;background:#e5b8e5"></div>
<div style="left:818px;top:397px;width:1095px;height:20px;background:#d8b4e4"></div>
<div style="left:253px;top:397px;width:1px;height:20px;background:#dedcde"></div>
<div style="left:386px;top:397px;width:1px;height:20px;background:#dedcde"></div>
<div style="left:602px;top:397px;width:1px;height:20px;background:#dedcde"></div>
<div style="left:695px;top:397px;width:1px;height:20px;background:#dedcde"></div>
<div style="left:817px;top:397px;width:1px;height:20px;background:#dedcde"></div>
<div style="left:906px;top:397px;width:1px;height:20px;background:#dedcde"></div>
<div style="left:1095px;top:397px;width:1px;height:20px;background:#dedcde"></div>
<div style="left:1341px;top:397px;width:1px;height:20px;background:#dedcde"></div>
<div style="left:1434px;top:397px;width:1px;height:20px;background:#dedcde"></div>
<div style="left:1606px;top:397px;width:1px;height:20px;background:#dedcde"></div>
<div style="left:1801px;top:397px;width:1px;height:20px;background:#dedcde"></div>
<svg style="left:57px;top:399px" width="12" height="16" viewBox="0 0 12 16"><g fill="none"><path d="M2.300 0l.4 3.400M9.500 0l-.4 3.400" stroke="#4a9ad8" stroke-width="1.500"/><path d="M0 3.900h11.900" stroke="#4a9ad8" stroke-width="1.500"/><path d="M2.600 4.500c0 2.300.8 3.800 2 5.200M9.200 4.500c0 2.300-.8 3.800-2 5.200" stroke="#4a8fd0" stroke-width="1.100"/><path d="M4.600 9.700L8.700 16M7.200 9.700L3 16M4 8h3.800" stroke="#3a72b8" stroke-width="1.100"/></g><circle cx="5.900" cy="11.700" r="1.400" fill="#3a72b8" opacity=".75"/></svg>
<div class="t r" style="left:19px;width:232px;top:399px;">Объект</div>
<div class="t r" style="left:254px;width:128.8px;top:399px;"><i>1</i></div>
<div class="t" style="left:390px;top:399px;letter-spacing:-0.08px;">Тепловые электростанции</div>
<div class="t r" style="left:603px;width:89.3px;top:399px;"><i>1006</i></div>
<div class="t" style="left:699px;top:399px;">Объект №<i>1006</i></div>
<svg style="left:21px;top:423px" width="9" height="9" viewBox="0 0 9 9"><rect x=".5" y=".5" width="8" height="8" fill="#fff" stroke="#8a8fa0"/><path d="M2 4.500h5" stroke="#30408a"/></svg>
<div class="t" style="left:35px;top:420px;letter-spacing:-0.03px">Тип результата : Фидеры/Счетчики</div>
<div style="left:33px;top:438px;width:1880px;height:21px;background:#dedcde"></div>
<div style="left:33px;top:438px;width:18px;height:20px;background:#c8e1d8"></div>
<div style="left:51px;top:438px;width:202px;height:20px;background:#bddbda"></div>
<div style="left:254px;top:438px;width:564px;height:20px;background:#c8e1d8"></div>
<div style="left:818px;top:438px;width:1095px;height:20px;background:#bddbda"></div>
<div style="left:253px;top:438px;width:1px;height:20px;background:#dedcde"></div>
<div style="left:386px;top:438px;width:1px;height:20px;background:#dedcde"></div>
<div style="left:602px;top:438px;width:1px;height:20px;background:#dedcde"></div>
<div style="left:695px;top:438px;width:1px;height:20px;background:#dedcde"></div>
<div style="left:817px;top:438px;width:1px;height:20px;background:#dedcde"></div>
<div style="left:906px;top:438px;width:1px;height:20px;background:#dedcde"></div>
<div style="left:1095px;top:438px;width:1px;height:20px;background:#dedcde"></div>
<div style="left:1341px;top:438px;width:1px;height:20px;background:#dedcde"></div>
<div style="left:1434px;top:438px;width:1px;height:20px;background:#dedcde"></div>
<div style="left:1606px;top:438px;width:1px;height:20px;background:#dedcde"></div>
<div style="left:1801px;top:438px;width:1px;height:20px;background:#dedcde"></div>
<svg style="left:56px;top:440px" width="14" height="16" viewBox="0 0 14 16"><path d="M1.500 0v16" stroke="#5a6a8c" stroke-width="1"/><path d="M2 1l11 5.500L2 11z" fill="#c84b55"/></svg>
<div class="t r" style="left:19px;width:232px;top:440px;">Фидер</div>
<div class="t r" style="left:254px;width:128.8px;top:440px;"><i>1</i></div>
<div class="t" style="left:390px;top:440px;letter-spacing:-0.08px;">Тепловые электростанции</div>
<div class="t r" style="left:603px;width:88.8px;top:440px;"><i>1001</i></div>
<div class="t" style="left:699px;top:440px;">Объект №<i>1001</i></div>
<div class="t r" style="left:818px;width:85.3px;top:440px;"><i>100</i></div>
<div class="t" style="left:910px;top:440px;">Фидер №<i>100</i> <i>1001</i></div>
<div class="t" style="left:1099px;top:440px;">Фидер №<i>100</i> <i>1001</i> Дисп</div>
<div class="t" style="left:1345px;top:440px;"><i>84258322</i></div>
<div class="t" style="left:1805px;top:440px;">SL<i>7000/761</i></div>
<div style="left:33px;top:459px;width:1880px;height:21px;background:#dedcde"></div>
<div style="left:33px;top:459px;width:18px;height:20px;background:#c8e1d8"></div>
<div style="left:51px;top:459px;width:202px;height:20px;background:#bddbda"></div>
<div style="left:254px;top:459px;width:564px;height:20px;background:#c8e1d8"></div>
<div style="left:818px;top:459px;width:1095px;height:20px;background:#bddbda"></div>
<div style="left:253px;top:459px;width:1px;height:20px;background:#dedcde"></div>
<div style="left:386px;top:459px;width:1px;height:20px;background:#dedcde"></div>
<div style="left:602px;top:459px;width:1px;height:20px;background:#dedcde"></div>
<div style="left:695px;top:459px;width:1px;height:20px;background:#dedcde"></div>
<div style="left:817px;top:459px;width:1px;height:20px;background:#dedcde"></div>
<div style="left:906px;top:459px;width:1px;height:20px;background:#dedcde"></div>
<div style="left:1095px;top:459px;width:1px;height:20px;background:#dedcde"></div>
<div style="left:1341px;top:459px;width:1px;height:20px;background:#dedcde"></div>
<div style="left:1434px;top:459px;width:1px;height:20px;background:#dedcde"></div>
<div style="left:1606px;top:459px;width:1px;height:20px;background:#dedcde"></div>
<div style="left:1801px;top:459px;width:1px;height:20px;background:#dedcde"></div>
<svg style="left:56px;top:461px" width="14" height="16" viewBox="0 0 14 16"><path d="M1.500 0v16" stroke="#5a6a8c" stroke-width="1"/><path d="M2 1l11 5.500L2 11z" fill="#c84b55"/></svg>
<div class="t r" style="left:19px;width:232px;top:461px;">Фидер</div>
<div class="t r" style="left:254px;width:128.8px;top:461px;"><i>1</i></div>
<div class="t" style="left:390px;top:461px;letter-spacing:-0.08px;">Тепловые электростанции</div>
<div class="t r" style="left:603px;width:89.3px;top:461px;"><i>1004</i></div>
<div class="t" style="left:699px;top:461px;">Объект №<i>1004</i></div>
<div class="t r" style="left:818px;width:85.3px;top:461px;"><i>100</i></div>
<div class="t" style="left:910px;top:461px;">Фидер №<i>100</i> <i>1004</i></div>
<div class="t" style="left:1099px;top:461px;">Фидер №<i>100</i> <i>1004</i> Дисп</div>
<div class="t" style="left:1345px;top:461px;"><i>84304926</i></div>
<div class="t" style="left:1805px;top:461px;">SL<i>7000/761</i></div>
<div style="left:33px;top:480px;width:1880px;height:21px;background:#dedcde"></div>
<div style="left:33px;top:480px;width:18px;height:20px;background:#c8e1d8"></div>
<div style="left:51px;top:480px;width:202px;height:20px;background:#bddbda"></div>
<div style="left:254px;top:480px;width:564px;height:20px;background:#c8e1d8"></div>
<div style="left:818px;top:480px;width:1095px;height:20px;background:#bddbda"></div>
<div style="left:253px;top:480px;width:1px;height:20px;background:#dedcde"></div>
<div style="left:386px;top:480px;width:1px;height:20px;background:#dedcde"></div>
<div style="left:602px;top:480px;width:1px;height:20px;background:#dedcde"></div>
<div style="left:695px;top:480px;width:1px;height:20px;background:#dedcde"></div>
<div style="left:817px;top:480px;width:1px;height:20px;background:#dedcde"></div>
<div style="left:906px;top:480px;width:1px;height:20px;background:#dedcde"></div>
<div style="left:1095px;top:480px;width:1px;height:20px;background:#dedcde"></div>
<div style="left:1341px;top:480px;width:1px;height:20px;background:#dedcde"></div>
<div style="left:1434px;top:480px;width:1px;height:20px;background:#dedcde"></div>
<div style="left:1606px;top:480px;width:1px;height:20px;background:#dedcde"></div>
<div style="left:1801px;top:480px;width:1px;height:20px;background:#dedcde"></div>
<svg style="left:56px;top:482px" width="14" height="16" viewBox="0 0 14 16"><path d="M1.500 0v16" stroke="#5a6a8c" stroke-width="1"/><path d="M2 1l11 5.500L2 11z" fill="#c84b55"/></svg>
<div class="t r" style="left:19px;width:232px;top:482px;">Фидер</div>
<div class="t r" style="left:254px;width:128.8px;top:482px;"><i>1</i></div>
<div class="t" style="left:390px;top:482px;letter-spacing:-0.08px;">Тепловые электростанции</div>
<div class="t r" style="left:603px;width:89.3px;top:482px;"><i>1006</i></div>
<div class="t" style="left:699px;top:482px;">Объект №<i>1006</i></div>
<div class="t r" style="left:818px;width:85.3px;top:482px;"><i>100</i></div>
<div class="t" style="left:910px;top:482px;">Фидер №<i>100</i> <i>1006</i></div>
<div class="t" style="left:1099px;top:482px;">Фидер №<i>100</i> <i>1006</i> Дисп</div>
<div class="t" style="left:1345px;top:482px;"><i>84658557</i></div>
<div class="t" style="left:1805px;top:482px;">SL<i>7000/761</i></div>
<div style="left:33px;top:501px;width:1880px;height:21px;background:#dedcde"></div>
<div style="left:33px;top:501px;width:18px;height:20px;background:#c8e1d8"></div>
<div style="left:51px;top:501px;width:202px;height:20px;background:#bddbda"></div>
<div style="left:254px;top:501px;width:564px;height:20px;background:#c8e1d8"></div>
<div style="left:818px;top:501px;width:1095px;height:20px;background:#bddbda"></div>
<div style="left:253px;top:501px;width:1px;height:20px;background:#dedcde"></div>
<div style="left:386px;top:501px;width:1px;height:20px;background:#dedcde"></div>
<div style="left:602px;top:501px;width:1px;height:20px;background:#dedcde"></div>
<div style="left:695px;top:501px;width:1px;height:20px;background:#dedcde"></div>
<div style="left:817px;top:501px;width:1px;height:20px;background:#dedcde"></div>
<div style="left:906px;top:501px;width:1px;height:20px;background:#dedcde"></div>
<div style="left:1095px;top:501px;width:1px;height:20px;background:#dedcde"></div>
<div style="left:1341px;top:501px;width:1px;height:20px;background:#dedcde"></div>
<div style="left:1434px;top:501px;width:1px;height:20px;background:#dedcde"></div>
<div style="left:1606px;top:501px;width:1px;height:20px;background:#dedcde"></div>
<div style="left:1801px;top:501px;width:1px;height:20px;background:#dedcde"></div>
<svg style="left:56px;top:503px" width="14" height="16" viewBox="0 0 14 16"><path d="M1.500 0v16" stroke="#5a6a8c" stroke-width="1"/><path d="M2 1l11 5.500L2 11z" fill="#c84b55"/></svg>
<div class="t r" style="left:19px;width:232px;top:503px;">Фидер</div>
<div class="t r" style="left:254px;width:128.8px;top:503px;"><i>1</i></div>
<div class="t" style="left:390px;top:503px;letter-spacing:-0.08px;">Тепловые электростанции</div>
<div class="t r" style="left:603px;width:89.3px;top:503px;"><i>1004</i></div>
<div class="t" style="left:699px;top:503px;">Объект №<i>1004</i></div>
<div class="t r" style="left:818px;width:84.8px;top:503px;"><i>101</i></div>
<div class="t" style="left:910px;top:503px;">Фидер №<i>101</i> <i>1004</i></div>
<div class="t" style="left:1099px;top:503px;">Фидер №<i>101</i> <i>1004</i> Дисп</div>
<div class="t" style="left:1345px;top:503px;"><i>84304956</i></div>
<div class="t" style="left:1805px;top:503px;">SL<i>7000/761</i></div>
<div style="left:33px;top:522px;width:1880px;height:21px;background:#dedcde"></div>
<div style="left:33px;top:522px;width:18px;height:20px;background:#c8e1d8"></div>
<div style="left:51px;top:522px;width:202px;height:20px;background:#bddbda"></div>
<div style="left:254px;top:522px;width:564px;height:20px;background:#c8e1d8"></div>
<div style="left:818px;top:522px;width:1095px;height:20px;background:#bddbda"></div>
<div style="left:253px;top:522px;width:1px;height:20px;background:#dedcde"></div>
<div style="left:386px;top:522px;width:1px;height:20px;background:#dedcde"></div>
<div style="left:602px;top:522px;width:1px;height:20px;background:#dedcde"></div>
<div style="left:695px;top:522px;width:1px;height:20px;background:#dedcde"></div>
<div style="left:817px;top:522px;width:1px;height:20px;background:#dedcde"></div>
<div style="left:906px;top:522px;width:1px;height:20px;background:#dedcde"></div>
<div style="left:1095px;top:522px;width:1px;height:20px;background:#dedcde"></div>
<div style="left:1341px;top:522px;width:1px;height:20px;background:#dedcde"></div>
<div style="left:1434px;top:522px;width:1px;height:20px;background:#dedcde"></div>
<div style="left:1606px;top:522px;width:1px;height:20px;background:#dedcde"></div>
<div style="left:1801px;top:522px;width:1px;height:20px;background:#dedcde"></div>
<svg style="left:56px;top:524px" width="14" height="16" viewBox="0 0 14 16"><path d="M1.500 0v16" stroke="#5a6a8c" stroke-width="1"/><path d="M2 1l11 5.500L2 11z" fill="#c84b55"/></svg>
<div class="t r" style="left:19px;width:232px;top:524px;">Фидер</div>
<div class="t r" style="left:254px;width:128.8px;top:524px;"><i>1</i></div>
<div class="t" style="left:390px;top:524px;letter-spacing:-0.08px;">Тепловые электростанции</div>
<div class="t r" style="left:603px;width:89.3px;top:524px;"><i>1006</i></div>
<div class="t" style="left:699px;top:524px;">Объект №<i>1006</i></div>
<div class="t r" style="left:818px;width:84.8px;top:524px;"><i>101</i></div>
<div class="t" style="left:910px;top:524px;">Фидер №<i>101</i> <i>1006</i></div>
<div class="t" style="left:1099px;top:524px;">Фидер №<i>101</i> <i>1006</i> Дисп</div>
<div class="t" style="left:1345px;top:524px;"><i>84570980</i></div>
<div class="t" style="left:1805px;top:524px;">SL<i>7000/761</i></div>
<div style="left:33px;top:543px;width:1880px;height:21px;background:#dedcde"></div>
<div style="left:33px;top:543px;width:18px;height:20px;background:#c8e1d8"></div>
<div style="left:51px;top:543px;width:202px;height:20px;background:#bddbda"></div>
<div style="left:254px;top:543px;width:564px;height:20px;background:#c8e1d8"></div>
<div style="left:818px;top:543px;width:1095px;height:20px;background:#bddbda"></div>
<div style="left:253px;top:543px;width:1px;height:20px;background:#dedcde"></div>
<div style="left:386px;top:543px;width:1px;height:20px;background:#dedcde"></div>
<div style="left:602px;top:543px;width:1px;height:20px;background:#dedcde"></div>
<div style="left:695px;top:543px;width:1px;height:20px;background:#dedcde"></div>
<div style="left:817px;top:543px;width:1px;height:20px;background:#dedcde"></div>
<div style="left:906px;top:543px;width:1px;height:20px;background:#dedcde"></div>
<div style="left:1095px;top:543px;width:1px;height:20px;background:#dedcde"></div>
<div style="left:1341px;top:543px;width:1px;height:20px;background:#dedcde"></div>
<div style="left:1434px;top:543px;width:1px;height:20px;background:#dedcde"></div>
<div style="left:1606px;top:543px;width:1px;height:20px;background:#dedcde"></div>
<div style="left:1801px;top:543px;width:1px;height:20px;background:#dedcde"></div>
<svg style="left:56px;top:545px" width="14" height="16" viewBox="0 0 14 16"><path d="M1.500 0v16" stroke="#5a6a8c" stroke-width="1"/><path d="M2 1l11 5.500L2 11z" fill="#c84b55"/></svg>
<div class="t r" style="left:19px;width:232px;top:545px;">Фидер</div>
<div class="t r" style="left:254px;width:128.8px;top:545px;"><i>1</i></div>
<div class="t" style="left:390px;top:545px;letter-spacing:-0.08px;">Тепловые электростанции</div>
<div class="t r" style="left:603px;width:89.3px;top:545px;"><i>1004</i></div>
<div class="t" style="left:699px;top:545px;">Объект №<i>1004</i></div>
<div class="t r" style="left:818px;width:85.3px;top:545px;"><i>102</i></div>
<div class="t" style="left:910px;top:545px;">Фидер №<i>102</i> <i>1004</i></div>
<div class="t" style="left:1099px;top:545px;">Фидер №<i>102</i> <i>1004</i> Дисп</div>
<div class="t" style="left:1345px;top:545px;"><i>84271455</i></div>
<div class="t" style="left:1805px;top:545px;">SL<i>7000/761</i></div>
<div style="left:33px;top:564px;width:1880px;height:21px;background:#dedcde"></div>
<div style="left:33px;top:564px;width:1880px;height:20px;background:#0078d7"></div>
<div style="left:253px;top:564px;width:1px;height:20px;background:#e8f0fa"></div>
<div style="left:386px;top:564px;width:1px;height:20px;background:#e8f0fa"></div>
<div style="left:602px;top:564px;width:1px;height:20px;background:#e8f0fa"></div>
<div style="left:695px;top:564px;width:1px;height:20px;background:#e8f0fa"></div>
<div style="left:817px;top:564px;width:1px;height:20px;background:#e8f0fa"></div>
<div style="left:906px;top:564px;width:1px;height:20px;background:#e8f0fa"></div>
<div style="left:1095px;top:564px;width:1px;height:20px;background:#e8f0fa"></div>
<div style="left:1341px;top:564px;width:1px;height:20px;background:#e8f0fa"></div>
<div style="left:1434px;top:564px;width:1px;height:20px;background:#e8f0fa"></div>
<div style="left:1606px;top:564px;width:1px;height:20px;background:#e8f0fa"></div>
<div style="left:1801px;top:564px;width:1px;height:20px;background:#e8f0fa"></div>
<svg style="left:56px;top:566px" width="14" height="16" viewBox="0 0 14 16"><path d="M1.500 0v16" stroke="#5a6a8c" stroke-width="1"/><path d="M2 1l11 5.500L2 11z" fill="#c84b55"/></svg>
<div class="t r" style="left:19px;width:232px;top:566px;color:#fff;">Фидер</div>
<div class="t r" style="left:254px;width:128.8px;top:566px;color:#fff;"><i>1</i></div>
<div class="t" style="left:390px;top:566px;color:#fff;letter-spacing:-0.08px;">Тепловые электростанции</div>
<div class="t r" style="left:603px;width:88.8px;top:566px;color:#fff;"><i>1001</i></div>
<div class="t" style="left:699px;top:566px;color:#fff;">Объект №<i>1001</i></div>
<div class="t r" style="left:818px;width:85.3px;top:566px;color:#fff;"><i>103</i></div>
<div class="t" style="left:910px;top:566px;color:#fff;">Фидер №<i>103</i> <i>1001</i></div>
<div class="t" style="left:1099px;top:566px;color:#fff;">Фидер №<i>103</i> <i>1001</i> Дисп</div>
<div class="t" style="left:1345px;top:566px;color:#fff;"><i>84258286</i></div>
<div class="t" style="left:1805px;top:566px;color:#fff;">SL<i>7000/761</i></div>
<div style="left:33px;top:585px;width:1880px;height:21px;background:#dedcde"></div>
<div style="left:33px;top:585px;width:18px;height:20px;background:#c8e1d8"></div>
<div style="left:51px;top:585px;width:202px;height:20px;background:#bddbda"></div>
<div style="left:254px;top:585px;width:564px;height:20px;background:#c8e1d8"></div>
<div style="left:818px;top:585px;width:1095px;height:20px;background:#bddbda"></div>
<div style="left:253px;top:585px;width:1px;height:20px;background:#dedcde"></div>
<div style="left:386px;top:585px;width:1px;height:20px;background:#dedcde"></div>
<div style="left:602px;top:585px;width:1px;height:20px;background:#dedcde"></div>
<div style="left:695px;top:585px;width:1px;height:20px;background:#dedcde"></div>
<div style="left:817px;top:585px;width:1px;height:20px;background:#dedcde"></div>
<div style="left:906px;top:585px;width:1px;height:20px;background:#dedcde"></div>
<div style="left:1095px;top:585px;width:1px;height:20px;background:#dedcde"></div>
<div style="left:1341px;top:585px;width:1px;height:20px;background:#dedcde"></div>
<div style="left:1434px;top:585px;width:1px;height:20px;background:#dedcde"></div>
<div style="left:1606px;top:585px;width:1px;height:20px;background:#dedcde"></div>
<div style="left:1801px;top:585px;width:1px;height:20px;background:#dedcde"></div>
<svg style="left:56px;top:587px" width="14" height="16" viewBox="0 0 14 16"><path d="M1.500 0v16" stroke="#5a6a8c" stroke-width="1"/><path d="M2 1l11 5.500L2 11z" fill="#c84b55"/></svg>
<div class="t r" style="left:19px;width:232px;top:587px;">Фидер</div>
<div class="t r" style="left:254px;width:128.8px;top:587px;"><i>1</i></div>
<div class="t" style="left:390px;top:587px;letter-spacing:-0.08px;">Тепловые электростанции</div>
<div class="t r" style="left:603px;width:89.3px;top:587px;"><i>1004</i></div>
<div class="t" style="left:699px;top:587px;">Объект №<i>1004</i></div>
<div class="t r" style="left:818px;width:85.3px;top:587px;"><i>103</i></div>
<div class="t" style="left:910px;top:587px;">Фидер №<i>103</i> <i>1004</i></div>
<div class="t" style="left:1099px;top:587px;">Фидер №<i>103</i> <i>1004</i> Дисп</div>
<div class="t" style="left:1345px;top:587px;"><i>84304934</i></div>
<div class="t" style="left:1805px;top:587px;">SL<i>7000/761</i></div>
<div style="left:33px;top:606px;width:1880px;height:21px;background:#dedcde"></div>
<div style="left:33px;top:606px;width:18px;height:20px;background:#c8e1d8"></div>
<div style="left:51px;top:606px;width:202px;height:20px;background:#bddbda"></div>
<div style="left:254px;top:606px;width:564px;height:20px;background:#c8e1d8"></div>
<div style="left:818px;top:606px;width:1095px;height:20px;background:#bddbda"></div>
<div style="left:253px;top:606px;width:1px;height:20px;background:#dedcde"></div>
<div style="left:386px;top:606px;width:1px;height:20px;background:#dedcde"></div>
<div style="left:602px;top:606px;width:1px;height:20px;background:#dedcde"></div>
<div style="left:695px;top:606px;width:1px;height:20px;background:#dedcde"></div>
<div style="left:817px;top:606px;width:1px;height:20px;background:#dedcde"></div>
<div style="left:906px;top:606px;width:1px;height:20px;background:#dedcde"></div>
<div style="left:1095px;top:606px;width:1px;height:20px;background:#dedcde"></div>
<div style="left:1341px;top:606px;width:1px;height:20px;background:#dedcde"></div>
<div style="left:1434px;top:606px;width:1px;height:20px;background:#dedcde"></div>
<div style="left:1606px;top:606px;width:1px;height:20px;background:#dedcde"></div>
<div style="left:1801px;top:606px;width:1px;height:20px;background:#dedcde"></div>
<svg style="left:56px;top:608px" width="14" height="16" viewBox="0 0 14 16"><path d="M1.500 0v16" stroke="#5a6a8c" stroke-width="1"/><path d="M2 1l11 5.500L2 11z" fill="#c84b55"/></svg>
<div class="t r" style="left:19px;width:232px;top:608px;">Фидер</div>
<div class="t r" style="left:254px;width:128.8px;top:608px;"><i>1</i></div>
<div class="t" style="left:390px;top:608px;letter-spacing:-0.08px;">Тепловые электростанции</div>
<div class="t r" style="left:603px;width:88.8px;top:608px;"><i>1001</i></div>
<div class="t" style="left:699px;top:608px;">Объект №<i>1001</i></div>
<div class="t r" style="left:818px;width:85.3px;top:608px;"><i>104</i></div>
<div class="t" style="left:910px;top:608px;">Фидер №<i>104</i> <i>1001</i></div>
<div class="t" style="left:1099px;top:608px;">Фидер №<i>104</i> <i>1001</i> Дисп</div>
<div class="t" style="left:1345px;top:608px;"><i>84207334</i></div>
<div class="t r" style="left:1435px;width:168.3px;top:608px;"><i>84207334</i></div>
<div class="t" style="left:1610px;top:608px;">SL<i>761</i>X<i>081</i></div>
<div class="t" style="left:1805px;top:608px;">SL<i>7000/761</i></div>
<div style="left:33px;top:627px;width:1880px;height:21px;background:#dedcde"></div>
<div style="left:33px;top:627px;width:18px;height:20px;background:#c8e1d8"></div>
<div style="left:51px;top:627px;width:202px;height:20px;background:#bddbda"></div>
<div style="left:254px;top:627px;width:564px;height:20px;background:#c8e1d8"></div>
<div style="left:818px;top:627px;width:1095px;height:20px;background:#bddbda"></div>
<div style="left:253px;top:627px;width:1px;height:20px;background:#dedcde"></div>
<div style="left:386px;top:627px;width:1px;height:20px;background:#dedcde"></div>
<div style="left:602px;top:627px;width:1px;height:20px;background:#dedcde"></div>
<div style="left:695px;top:627px;width:1px;height:20px;background:#dedcde"></div>
<div style="left:817px;top:627px;width:1px;height:20px;background:#dedcde"></div>
<div style="left:906px;top:627px;width:1px;height:20px;background:#dedcde"></div>
<div style="left:1095px;top:627px;width:1px;height:20px;background:#dedcde"></div>
<div style="left:1341px;top:627px;width:1px;height:20px;background:#dedcde"></div>
<div style="left:1434px;top:627px;width:1px;height:20px;background:#dedcde"></div>
<div style="left:1606px;top:627px;width:1px;height:20px;background:#dedcde"></div>
<div style="left:1801px;top:627px;width:1px;height:20px;background:#dedcde"></div>
<svg style="left:56px;top:629px" width="14" height="16" viewBox="0 0 14 16"><path d="M1.500 0v16" stroke="#5a6a8c" stroke-width="1"/><path d="M2 1l11 5.500L2 11z" fill="#c84b55"/></svg>
<div class="t r" style="left:19px;width:232px;top:629px;">Фидер</div>
<div class="t r" style="left:254px;width:128.8px;top:629px;"><i>1</i></div>
<div class="t" style="left:390px;top:629px;letter-spacing:-0.08px;">Тепловые электростанции</div>
<div class="t r" style="left:603px;width:89.3px;top:629px;"><i>1004</i></div>
<div class="t" style="left:699px;top:629px;">Объект №<i>1004</i></div>
<div class="t r" style="left:818px;width:85.3px;top:629px;"><i>104</i></div>
<div class="t" style="left:910px;top:629px;">Фидер №<i>104</i> <i>1004</i></div>
<div class="t" style="left:1099px;top:629px;">Фидер №<i>104</i> <i>1004</i> Дисп</div>
<div class="t" style="left:1345px;top:629px;"><i>84309822</i></div>
<div class="t" style="left:1805px;top:629px;">SL<i>7000/761</i></div>
<div style="left:33px;top:648px;width:1880px;height:21px;background:#dedcde"></div>
<div style="left:33px;top:648px;width:18px;height:20px;background:#c8e1d8"></div>
<div style="left:51px;top:648px;width:202px;height:20px;background:#bddbda"></div>
<div style="left:254px;top:648px;width:564px;height:20px;background:#c8e1d8"></div>
<div style="left:818px;top:648px;width:1095px;height:20px;background:#bddbda"></div>
<div style="left:253px;top:648px;width:1px;height:20px;background:#dedcde"></div>
<div style="left:386px;top:648px;width:1px;height:20px;background:#dedcde"></div>
<div style="left:602px;top:648px;width:1px;height:20px;background:#dedcde"></div>
<div style="left:695px;top:648px;width:1px;height:20px;background:#dedcde"></div>
<div style="left:817px;top:648px;width:1px;height:20px;background:#dedcde"></div>
<div style="left:906px;top:648px;width:1px;height:20px;background:#dedcde"></div>
<div style="left:1095px;top:648px;width:1px;height:20px;background:#dedcde"></div>
<div style="left:1341px;top:648px;width:1px;height:20px;background:#dedcde"></div>
<div style="left:1434px;top:648px;width:1px;height:20px;background:#dedcde"></div>
<div style="left:1606px;top:648px;width:1px;height:20px;background:#dedcde"></div>
<div style="left:1801px;top:648px;width:1px;height:20px;background:#dedcde"></div>
<svg style="left:56px;top:650px" width="14" height="16" viewBox="0 0 14 16"><path d="M1.500 0v16" stroke="#5a6a8c" stroke-width="1"/><path d="M2 1l11 5.500L2 11z" fill="#c84b55"/></svg>
<div class="t r" style="left:19px;width:232px;top:650px;">Фидер</div>
<div class="t r" style="left:254px;width:128.8px;top:650px;"><i>1</i></div>
<div class="t" style="left:390px;top:650px;letter-spacing:-0.08px;">Тепловые электростанции</div>
<div class="t r" style="left:603px;width:89.3px;top:650px;"><i>1004</i></div>
<div class="t" style="left:699px;top:650px;">Объект №<i>1004</i></div>
<div class="t r" style="left:818px;width:85.3px;top:650px;"><i>105</i></div>
<div class="t" style="left:910px;top:650px;">Фидер №<i>105</i> <i>1004</i></div>
<div class="t" style="left:1099px;top:650px;">Фидер №<i>105</i> <i>1004</i> Дисп</div>
<div class="t" style="left:1345px;top:650px;"><i>84309860</i></div>
<div class="t" style="left:1805px;top:650px;">SL<i>7000/761</i></div>
<div style="left:1913px;top:293px;width:1px;height:683px;background:#f0f0f0"></div>
<div style="left:18px;top:417px;width:15px;height:1px;background:#dcdcdc"></div>
<div style="left:818px;top:564px;width:88px;height:20px;background:#bddbda;border-top:1px dotted #222;border-bottom:1px dotted #222"></div>
<div style="left:886px;top:566px;width:18px;height:15px;background:#0078d7"></div>
<div class="t r" style="left:818px;width:85.3px;top:566px;color:#fff"><i>103</i></div>
<div style="left:33px;top:564px;width:785px;height:1px;background:repeating-linear-gradient(90deg,#f0a860 0 1px,transparent 1px 2px)"></div>
<div style="left:906px;top:564px;width:1007px;height:1px;background:repeating-linear-gradient(90deg,#f0a860 0 1px,transparent 1px 2px)"></div>
<div style="left:33px;top:583px;width:785px;height:1px;background:repeating-linear-gradient(90deg,#f0a860 0 1px,transparent 1px 2px)"></div>
<div style="left:906px;top:583px;width:1007px;height:1px;background:repeating-linear-gradient(90deg,#f0a860 0 1px,transparent 1px 2px)"></div>
<div style="left:33px;top:564px;width:1px;height:20px;background:repeating-linear-gradient(180deg,#f0a860 0 1px,transparent 1px 2px)"></div>
<div style="left:1912px;top:564px;width:1px;height:20px;background:repeating-linear-gradient(180deg,#f0a860 0 1px,transparent 1px 2px)"></div>
<svg style="left:9px;top:570px" width="7" height="9" viewBox="0 0 7 9"><path d="M.5.500v8M.5.500l5 4-5 4M2.500 4.500h3" fill="none" stroke="#222" stroke-width="1"/></svg>
<div style="left:6px;top:976px;width:1908px;height:40px;background:#f0f0f0"></div>
<div style="left:11px;top:988px;width:15px;height:15px;background:#c9505c"></div>
<div style="left:31px;top:990px;width:13px;height:12px;background:#fff;border:1px solid #333"></div>
<svg style="left:33px;top:992px" width="10" height="8" viewBox="0 0 10 8"><path d="M.7 3.500l2.800 3L9 .8" fill="none" stroke="#222" stroke-width="1.300"/></svg>
<div style="left:51px;top:982px;width:3px;height:27px;border:1px solid #d8d8d8;border-right:none"></div>
<div style="left:55px;top:985px;width:50px;height:21px;background:#ecc9a9"></div>
<div class="t c" style="left:55px;width:50px;top:988px">Объект</div>
<div style="left:107px;top:985px;width:16px;height:21px;background:#c1cde4"></div>
<div class="t c" style="left:107px;width:16px;top:988px">в</div>
<div style="left:125px;top:985px;width:90px;height:21px;background:#c5d8c5"></div>
<div class="t c" style="left:125px;width:90px;top:988px">Объект №<i>1001</i></div>
<div style="left:217px;top:985px;width:90px;height:21px;background:#c5d8c5"></div>
<div class="t c" style="left:217px;width:90px;top:988px">Объект №<i>1004</i></div>
<div style="left:309px;top:985px;width:90px;height:21px;background:#c5d8c5"></div>
<div class="t c" style="left:309px;width:90px;top:988px">Объект №<i>1006</i></div>
<div style="left:401px;top:986px;width:1px;height:19px;background:#e4e4e4"></div>
<div style="left:1830px;top:982px;width:79px;height:27px;background:#e1e1e1;border:1px solid #adadad"></div>
<div class="t c" style="left:1830px;width:79px;top:988px">Настроить...</div>
<div style="left:7px;top:1016px;width:16px;height:17px;background:#e4e4e4;border:1px solid #b4b4b4"></div>
<svg style="left:7px;top:1016px" width="16" height="17" viewBox="0 0 16 17"><path d="M3 5h1.500v7H3zM9 5v7L4.500 8.500zM13.500 5v7L9 8.500z" fill="#1a1a1a"/></svg>
<div style="left:25px;top:1016px;width:16px;height:17px;background:#e4e4e4;border:1px solid #b4b4b4"></div>
<svg style="left:25px;top:1016px" width="16" height="17" viewBox="0 0 16 17"><path d="M8 5v7L3.500 8.500zM12.500 5v7L8 8.500z" fill="#1a1a1a"/></svg>
<div style="left:43px;top:1016px;width:16px;height:17px;background:#e4e4e4;border:1px solid #b4b4b4"></div>
<svg style="left:43px;top:1016px" width="16" height="17" viewBox="0 0 16 17"><path d="M10 5v7L5.500 8.500z" fill="#1a1a1a"/></svg>
<div style="left:61px;top:1016px;width:16px;height:17px;background:#e4e4e4;border:1px solid #b4b4b4"></div>
<svg style="left:61px;top:1016px" width="16" height="17" viewBox="0 0 16 17"><path d="M6.500 5v7L11 8.500z" fill="#1a1a1a"/></svg>
<div style="left:79px;top:1016px;width:16px;height:17px;background:#e4e4e4;border:1px solid #b4b4b4"></div>
<svg style="left:79px;top:1016px" width="16" height="17" viewBox="0 0 16 17"><path d="M4 5v7l4.500-3.500zM8.500 5v7L13 8.500z" fill="#1a1a1a"/></svg>
<div style="left:97px;top:1016px;width:16px;height:17px;background:#e4e4e4;border:1px solid #b4b4b4"></div>
<svg style="left:97px;top:1016px" width="16" height="17" viewBox="0 0 16 17"><path d="M3 5v7l4.500-3.500zM7.500 5v7L12 8.500zM12 5h1.500v7H12z" fill="#1a1a1a"/></svg>
<div style="left:115px;top:1016px;width:16px;height:17px;background:#e4e4e4;border:1px solid #b4b4b4"></div>
<svg style="left:115px;top:1016px" width="16" height="17" viewBox="0 0 16 17"><path d="M3.500 9.500c.5-3.500 5-4.500 7.500-1.500" fill="none" stroke="#1a1a1a" stroke-width="1.600"/><path d="M8.500 9.500l4.500 2V6.500z" fill="#1a1a1a"/></svg>
<div style="left:133px;top:1016px;width:16px;height:17px;background:#e4e4e4;border:1px solid #b4b4b4"></div>
<svg style="left:133px;top:1016px" width="16" height="17" viewBox="0 0 16 17"><path d="M8 4v9M3.500 8.500h9M4.800 5.300l6.400 6.400M11.200 5.300l-6.400 6.400" stroke="#111" stroke-width="1.200"/><circle cx="8" cy="8.500" r="1" fill="#2030a0"/></svg>
<div style="left:151px;top:1016px;width:16px;height:17px;background:#d0d0d0;border:1px solid #b4b4b4"></div>
<svg style="left:151px;top:1016px" width="16" height="17" viewBox="0 0 16 17"><path d="M9.500 6.500v8M5.500 10.500h8M6.700 7.700l5.600 5.600M12.300 7.700l-5.600 5.600" stroke="#f6f6f6" stroke-width="1.100"/><path d="M9 6v8M5 10h8M6.200 7.200l5.600 5.600M11.800 7.200l-5.600 5.600" stroke="#9c9c9c" stroke-width="1.100"/><path d="M3 4l3.500 2-2.500 1.500z" fill="#808080"/></svg>
<div style="left:169px;top:1016px;width:16px;height:17px;background:#e4e4e4;border:1px solid #b4b4b4"></div>
<svg style="left:169px;top:1016px" width="16" height="17" viewBox="0 0 16 17"><path d="M4 4.500h8.500V6l-3 3h-2.500l-3-3z" fill="#f28a18"/><rect x="6.800" y="9" width="3" height="3.500" fill="#f49a28"/><path d="M5.500 5.500h5.500" stroke="#ffd9a0" stroke-width=".8"/></svg>
<div style="left:187px;top:1016px;width:16px;height:17px;background:#e4e4e4;border:1px solid #b4b4b4"></div>
<svg style="left:187px;top:1016px" width="16" height="17" viewBox="0 0 16 17"><rect x="2" y="2" width="12" height="13" fill="#f8f8f8"/><rect x="3" y="6" width="8.500" height="8" fill="#2a4f9a"/><rect x="5" y="6" width="4.500" height="3" fill="#d8e0f0"/><rect x="5" y="11" width="4.500" height="3" fill="#e8e8e8"/><path d="M7 6.500c.5-2 2-3 4-3V2l3 3-3 3V6.500c-1.500 0-2.800 0-4 0z" fill="#62c030" stroke="#2e8a12" stroke-width=".5"/></svg>
<div style="left:205px;top:1016px;width:16px;height:17px;background:#e4e4e4;border:1px solid #b4b4b4"></div>
<svg style="left:205px;top:1016px" width="16" height="17" viewBox="0 0 16 17"><rect x="2.500" y="3" width="11" height="11" fill="#fff"/><path d="M2.500 3h11v2.500h-11z" fill="#f0a060"/><path d="M2.500 6.200h3.300v3.300H2.500z" fill="#e85050"/><path d="M6.300 6.200h3.300v3.300H6.300z" fill="#f0a030"/><path d="M10.200 10.200h3.300V14h-3.300z" fill="#68b848"/><path d="M2.500 10.200h3.300V14H2.500z" fill="#4878d0"/><path d="M6 3v11M9.900 3v11M2.500 5.800h11M2.500 9.800h11" stroke="#e8c8c8" stroke-width=".6"/></svg>
<div style="left:223px;top:1016px;width:16px;height:17px;background:#e4e4e4;border:1px solid #b4b4b4"></div>
<svg style="left:223px;top:1016px" width="16" height="17" viewBox="0 0 16 17"><rect x="2" y="3" width="12" height="11" fill="#fafafa"/><ellipse cx="5" cy="9.500" rx="2.500" ry="3.500" fill="#3858a8"/><ellipse cx="11" cy="9.500" rx="2.500" ry="3.500" fill="#3858a8"/><rect x="3.800" y="4" width="2.600" height="4" fill="#3858a8"/><rect x="9.600" y="4" width="2.600" height="4" fill="#3858a8"/><rect x="6.500" y="6.500" width="3" height="2.500" fill="#6a86c8"/><ellipse cx="5" cy="10" rx="1.200" ry="2" fill="#c0d0f4"/><ellipse cx="11" cy="10" rx="1.200" ry="2" fill="#c0d0f4"/></svg>
<div style="left:0px;top:1040px;width:1920px;height:8px;background:#1e3434"></div>
<div style="left:296px;top:1040px;width:48px;height:8px;background:#4a5c5e"></div>
<div style="left:1915px;top:1040px;width:1px;height:8px;background:#7a8a8a"></div>
<div style="left:0px;top:1037px;width:1920px;height:3px;background:#f6f6f6"></div>
<div style="left:1820px;top:1045px;width:26px;height:3px;overflow:hidden"><div class="t" style="left:0;top:0;color:#fff;font-size:11px;line-height:11px">11:12</div></div>
<svg style="left:1656.7px;top:242.6px" width="239.6" height="67.8" viewBox="1656.7 242.6 239.6 67.8"><ellipse cx="1776.5" cy="276.5" rx="115.2" ry="29.3" fill="none" stroke="#ed1c24" stroke-width="4.6"/></svg>
<svg style="left:793.6px;top:304.49999999999994px" width="39.2" height="42.8" viewBox="793.6 304.49999999999994 39.2 42.8"><ellipse cx="813.2" cy="325.9" rx="15" ry="16.8" fill="none" stroke="#ed1c24" stroke-width="4.6"/></svg>
<svg style="left:857.5px;top:547.5px" width="64.2" height="52.2" viewBox="857.5 547.5 64.2 52.2"><ellipse cx="889.6" cy="573.6" rx="27.2" ry="21.2" fill="none" stroke="#ed1c24" stroke-width="4.9"/></svg>
<svg style="left:11.199999999999994px;top:973.8000000000001px" width="456.0" height="44.400000000000006" viewBox="11.199999999999994 973.8000000000001 456.0 44.400000000000006"><ellipse cx="239.2" cy="996" rx="223.6" ry="17.8" fill="none" stroke="#ed1c24" stroke-width="4.4"/></svg>
</body></html>
